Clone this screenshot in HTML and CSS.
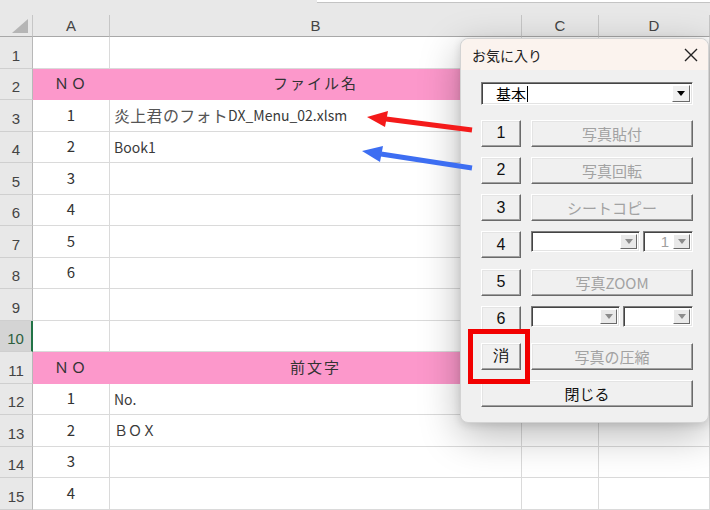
FILE: index.html
```html
<!DOCTYPE html>
<html lang="ja">
<head>
    <meta charset="UTF-8">
    <title>お気に入り</title>
    <link rel="stylesheet" href="styles.css">
</head>
<body>
    <div class="topbar"><div class="formula"></div></div>

    <div class="sheet">
        <div class="row cols">
            <div class="cell corner"><span class="tri"></span></div>
            <div class="cell">A</div>
            <div class="cell">B</div>
            <div class="cell">C</div>
            <div class="cell">D</div>
        </div>
        <div class="row">
            <div class="cell rh">1</div><div class="cell"></div><div class="cell"></div><div class="cell"></div><div class="cell"></div>
        </div>
        <div class="row pink">
            <div class="cell rh">2</div><div class="cell num fill">ＮＯ</div><div class="cell num fill">ファイル名</div><div class="cell"></div><div class="cell"></div>
        </div>
        <div class="row">
            <div class="cell rh">3</div><div class="cell num">1</div><div class="cell txt"><span class="jp">炎上君のフォト</span>DX_Menu_02.xlsm</div><div class="cell"></div><div class="cell"></div>
        </div>
        <div class="row">
            <div class="cell rh">4</div><div class="cell num">2</div><div class="cell txt">Book1</div><div class="cell"></div><div class="cell"></div>
        </div>
        <div class="row">
            <div class="cell rh">5</div><div class="cell num">3</div><div class="cell"></div><div class="cell"></div><div class="cell"></div>
        </div>
        <div class="row">
            <div class="cell rh">6</div><div class="cell num">4</div><div class="cell"></div><div class="cell"></div><div class="cell"></div>
        </div>
        <div class="row">
            <div class="cell rh">7</div><div class="cell num">5</div><div class="cell"></div><div class="cell"></div><div class="cell"></div>
        </div>
        <div class="row">
            <div class="cell rh">8</div><div class="cell num">6</div><div class="cell"></div><div class="cell"></div><div class="cell"></div>
        </div>
        <div class="row">
            <div class="cell rh">9</div><div class="cell"></div><div class="cell"></div><div class="cell"></div><div class="cell"></div>
        </div>
        <div class="row">
            <div class="cell rh active">10</div><div class="cell"></div><div class="cell"></div><div class="cell"></div><div class="cell"></div>
        </div>
        <div class="row pink">
            <div class="cell rh">11</div><div class="cell num fill">ＮＯ</div><div class="cell num fill">前文字</div><div class="cell"></div><div class="cell"></div>
        </div>
        <div class="row">
            <div class="cell rh">12</div><div class="cell num">1</div><div class="cell txt">No.</div><div class="cell"></div><div class="cell"></div>
        </div>
        <div class="row">
            <div class="cell rh">13</div><div class="cell num">2</div><div class="cell txt">ＢＯＸ</div><div class="cell"></div><div class="cell"></div>
        </div>
        <div class="row">
            <div class="cell rh">14</div><div class="cell num">3</div><div class="cell"></div><div class="cell"></div><div class="cell"></div>
        </div>
        <div class="row">
            <div class="cell rh">15</div><div class="cell num">4</div><div class="cell"></div><div class="cell"></div><div class="cell"></div>
        </div>
    </div>

    <!-- favourites form -->
    <div class="dialog">
        <div class="titlebar">
            <span>お気に入り</span>
            <svg class="close" width="16" height="16" viewBox="0 0 16 16">
                <path d="M2 2 L14 14 M14 2 L2 14" stroke="#222" stroke-width="1.4" fill="none"/>
            </svg>
        </div>
        <div class="body">
            <div class="combo main">
                <span class="value">基本<i class="caret"></i></span>
                <span class="drop"><i class="arrow"></i></span>
            </div>
            <div class="line">
                <div class="btn key">1</div>
                <div class="btn wide off">写真貼付</div>
            </div>
            <div class="line">
                <div class="btn key">2</div>
                <div class="btn wide off">写真回転</div>
            </div>
            <div class="line">
                <div class="btn key">3</div>
                <div class="btn wide off">シートコピー</div>
            </div>
            <div class="line">
                <div class="btn key">4</div>
                <div class="combo small w109"><span class="value"></span><span class="drop"><i class="arrow"></i></span></div>
                <div class="combo small w50"><span class="value right">1</span><span class="drop"><i class="arrow"></i></span></div>
            </div>
            <div class="line">
                <div class="btn key">5</div>
                <div class="btn wide off">写真ZOOM</div>
            </div>
            <div class="line">
                <div class="btn key">6</div>
                <div class="combo small w89"><span class="value"></span><span class="drop"><i class="arrow"></i></span></div>
                <div class="combo small w70"><span class="value"></span><span class="drop"><i class="arrow"></i></span></div>
            </div>
            <div class="line">
                <div class="btn key">消</div>
                <div class="btn wide off">写真の圧縮</div>
            </div>
            <div class="btn full">閉じる</div>
        </div>
        <div class="mark"></div>
    </div>

    <svg class="arrows" width="710" height="510" viewBox="0 0 710 510">
        <line x1="472" y1="130" x2="386" y2="119" stroke="#f41a1a" stroke-width="5"/>
        <polygon points="367,117 388,111 385,127" fill="#f41a1a"/>
        <line x1="472" y1="168" x2="381" y2="154" stroke="#3d6ef2" stroke-width="5"/>
        <polygon points="362,151 383,146 380,162" fill="#3d6ef2"/>
    </svg>
</body>
</html>
```

FILE: styles.css
```css
* {
    box-sizing: border-box;
}

body {
    margin: 0;
    width: 710px;
    height: 510px;
    overflow: hidden;
    position: relative;
    background-color: #fff;
    font-family: "Noto Sans CJK JP", sans-serif;
    color: #333;
}

.topbar {
    height: 15px;
    background-color: #e8e8e8;
}

.formula {
    margin-left: 317px;
    height: 3px;
    background-color: #fff;
    border-bottom: 1px solid #c4c4c4;
}

.row {
    display: grid;
    grid-template-columns: 33px 77px 412px 77px 111px;
    height: 31.53px;
}

.cell {
    display: flex;
    align-items: center;
    border-right: 1px solid #dadada;
    border-bottom: 1px solid #dadada;
    font-size: 14px;
    white-space: nowrap;
}

.cols {
    height: 22px;
}

.cols .cell {
    justify-content: center;
    background-color: #e8e8e8;
    border-right-color: #c6c6c6;
    border-bottom-color: #a8a8a8;
    color: #444;
    font-family: "Liberation Sans", sans-serif;
    font-size: 15px;
}

.cols .corner {
    justify-content: flex-end;
    align-items: flex-end;
    padding: 0 4px 3px 0;
}

.tri {
    width: 16px;
    height: 14px;
    background-color: #b5b5b5;
    clip-path: polygon(100% 0, 100% 100%, 0 100%);
}

.rh {
    justify-content: center;
    background-color: #e8e8e8;
    border-right-color: #b8b8b8;
    border-bottom-color: #cfcfcf;
    color: #444;
    font-family: "Liberation Sans", sans-serif;
    font-size: 15px;
    padding-top: 6px;
}

.rh.active {
    background-color: #d4d4d4;
    color: #2d5f3e;
    border-right: 2px solid #217346;
}

.num {
    justify-content: center;
    font-size: 15px;
    padding-bottom: 2px;
}

.txt {
    padding-left: 4px;
    font-size: 14px;
    color: #3a3a3a;
}

.txt .jp {
    font-size: 16px;
    letter-spacing: 0.3px;
    color: #555;
}

.fill {
    background-color: #fc98cb;
    border-right-color: #fc98cb;
    border-bottom-color: #fc98cb;
    letter-spacing: 2px;
}

.dialog {
    position: absolute;
    left: 460px;
    top: 38px;
    width: 249px;
    height: 385px;
    background-color: #f0f0f0;
    border: 1px solid #d3d3d3;
    border-radius: 8px;
    box-shadow: 0 12px 40px rgba(0, 0, 0, 0.28), 0 2px 8px rgba(0, 0, 0, 0.12);
}

.titlebar {
    height: 31px;
    display: flex;
    align-items: center;
    justify-content: space-between;
    padding: 0 9px 0 11px;
    background-color: #fbf3ee;
    border-radius: 8px 8px 0 0;
    font-size: 14px;
    color: #222;
}

.body {
    display: flex;
    flex-direction: column;
    gap: 10.2px;
    padding: 12px 15px 0 20px;
}

.line {
    display: flex;
    gap: 10px;
    height: 27px;
}

.btn {
    display: flex;
    align-items: center;
    justify-content: center;
    height: 27px;
    background-color: #f0f0f0;
    border: 1px solid;
    border-color: #fff #6a6a6a #6a6a6a #fff;
    box-shadow: inset -1px -1px #a0a0a0, inset 1px 1px #e4e4e4;
    font-size: 15px;
    color: #111;
}

.key {
    width: 40px;
    font-family: "Liberation Sans", sans-serif;
    font-size: 16px;
}

.wide {
    width: 162px;
}

.off {
    color: #a2a2a2;
}

.full {
    width: 212px;
}

.combo {
    display: flex;
    background-color: #fff;
    border: 1px solid;
    border-color: #7c7c7c #fff #fff #7c7c7c;
    box-shadow: inset 1px 1px #444, inset -1px -1px #e3e3e3;
    padding: 2px;
}

.combo .value {
    flex: 1;
    display: flex;
    align-items: center;
    font-size: 15px;
    color: #000;
}

.combo .drop {
    display: flex;
    align-items: center;
    justify-content: center;
    width: 18px;
    background-color: #f0f0f0;
    border: 1px solid;
    border-color: #fff #6a6a6a #6a6a6a #fff;
}

.arrow {
    width: 0;
    height: 0;
    border-left: 4px solid transparent;
    border-right: 4px solid transparent;
    border-top: 5px solid #000;
}

.main {
    height: 23px;
    width: 212px;
    margin-bottom: 4.6px;
}

.main .value {
    padding-left: 12px;
}

.caret {
    width: 1px;
    height: 16px;
    background-color: #000;
    margin-left: 1px;
}

.small {
    height: 21px;
}

.small .drop {
    width: 17px;
    background-color: #e9e9e9;
}

.small .arrow {
    border-top-color: #8c8c8c;
}

.small .value.right {
    justify-content: flex-end;
    padding-right: 4px;
    color: #a0a0a0;
    font-family: "Liberation Sans", sans-serif;
}

.w109 {
    width: 109px;
}

.w50 {
    width: 50px;
    margin-left: -7px;
}

.w89 {
    width: 89px;
}

.w70 {
    width: 70px;
    margin-left: -7px;
}

.mark {
    position: absolute;
    left: 7px;
    top: 290px;
    width: 62px;
    height: 55px;
    border: 5px solid #f20000;
}

.arrows {
    position: absolute;
    left: 0;
    top: 0;
    pointer-events: none;
}
```
